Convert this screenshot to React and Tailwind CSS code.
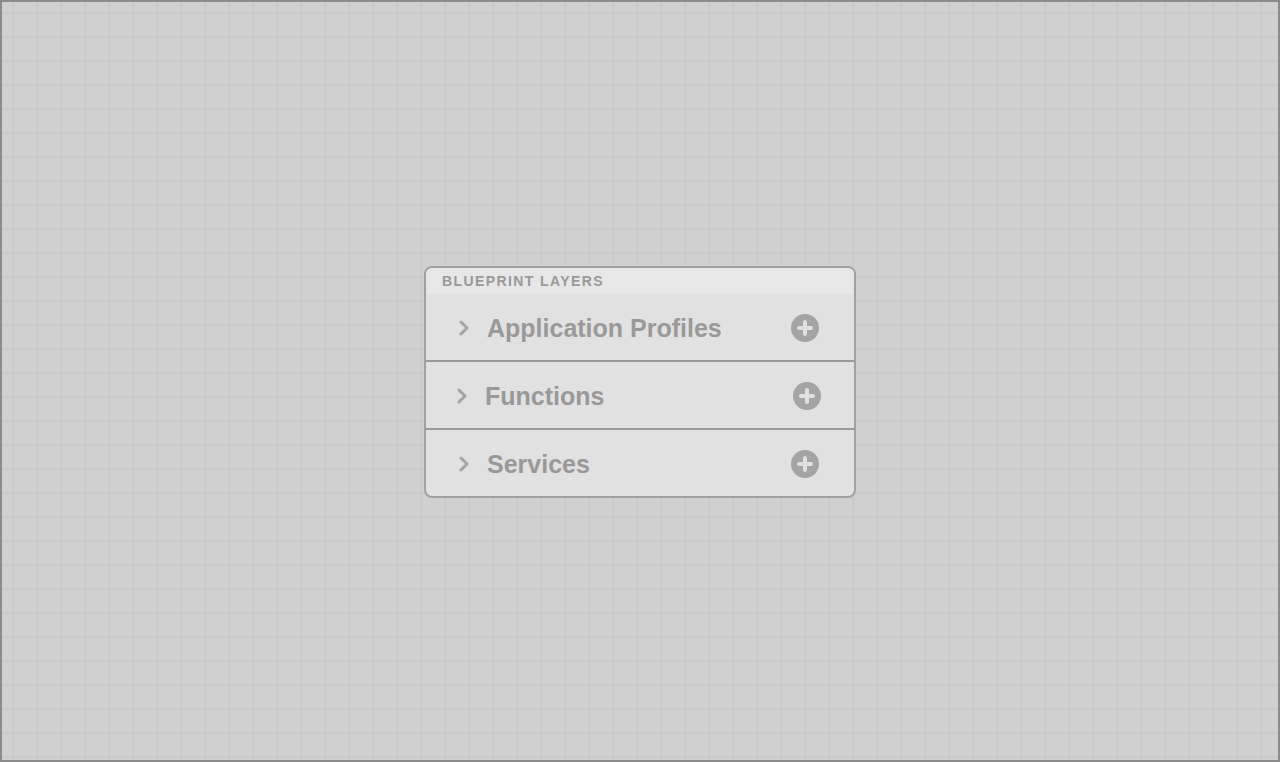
import React, { useState } from "react";
import clsx from "clsx";

const initialLayers = [
  { id: "profiles", name: "Application Profiles" },
  { id: "functions", name: "Functions" },
  { id: "services", name: "Services" }
];

function ChevronIcon({ open }) {
  return (
    <svg
      viewBox="0 0 12 16"
      className={clsx("w-3 h-4 shrink-0", open && "rotate-90")}
      fill="none"
      stroke="#a4a4a4"
      strokeWidth="3"
      strokeLinecap="round"
      strokeLinejoin="round"
      aria-hidden="true"
    >
      <path d="M3 2 9 8l-6 6" />
    </svg>
  );
}

function PlusIcon() {
  return (
    <svg viewBox="0 0 28 28" className="w-7 h-7" aria-hidden="true">
      <circle cx="14" cy="14" r="14" fill="#a4a4a4" />
      <path d="M14 8v12M8 14h12" stroke="#e1e1e1" strokeWidth="4" strokeLinecap="round" />
    </svg>
  );
}

function LayerRow({ layer, selected, open, onToggle }) {
  return (
    <li
      className={clsx(
        "flex items-center justify-between pt-5 pb-[18px]",
        selected ? "pl-[30px] pr-[33px]" : "pl-8 pr-[35px]"
      )}
    >
      <button
        type="button"
        aria-expanded={open}
        onClick={onToggle}
        className="flex items-center gap-[17px] text-[25px] leading-7 font-bold"
      >
        <ChevronIcon open={open} />
        {layer.name}
      </button>
      <button type="button" aria-label={"Add to " + layer.name} className="rounded-full">
        <PlusIcon />
      </button>
    </li>
  );
}

function App() {
  const [openLayers, setOpenLayers] = useState([]);

  function toggleLayer(id) {
    setOpenLayers(
      openLayers.includes(id)
        ? openLayers.filter(function (item) { return item !== id; })
        : [...openLayers, id]
    );
  }

  return (
    <main className="min-h-screen flex items-center justify-center pt-0.5 border-2 border-[#8b8b8b] bg-[#d0d0d0] bg-[linear-gradient(to_right,#cacaca_2px,transparent_2px),linear-gradient(to_bottom,#cacaca_2px,transparent_2px)] bg-size-[24px_24px] bg-position-[10px_10px] font-['Liberation_Sans',Arial,sans-serif] text-[#999999]">
      <section className="w-full max-w-[432px] overflow-hidden rounded-lg border-2 border-[#a1a1a1] bg-[#e1e1e1]">
        <h1 className="h-[26px] px-4 bg-[#e7e7e7] text-sm leading-[26px] font-bold tracking-widest uppercase">
          Blueprint Layers
        </h1>
        <ul className="divide-y-2 divide-[#999999]">
          {initialLayers.map(function (layer) {
            return (
              <LayerRow
                key={layer.id}
                layer={layer}
                selected={layer.id === "functions"}
                open={openLayers.includes(layer.id)}
                onToggle={function () { toggleLayer(layer.id); }}
              />
            );
          })}
        </ul>
      </section>
    </main>
  );
}

export default App;
